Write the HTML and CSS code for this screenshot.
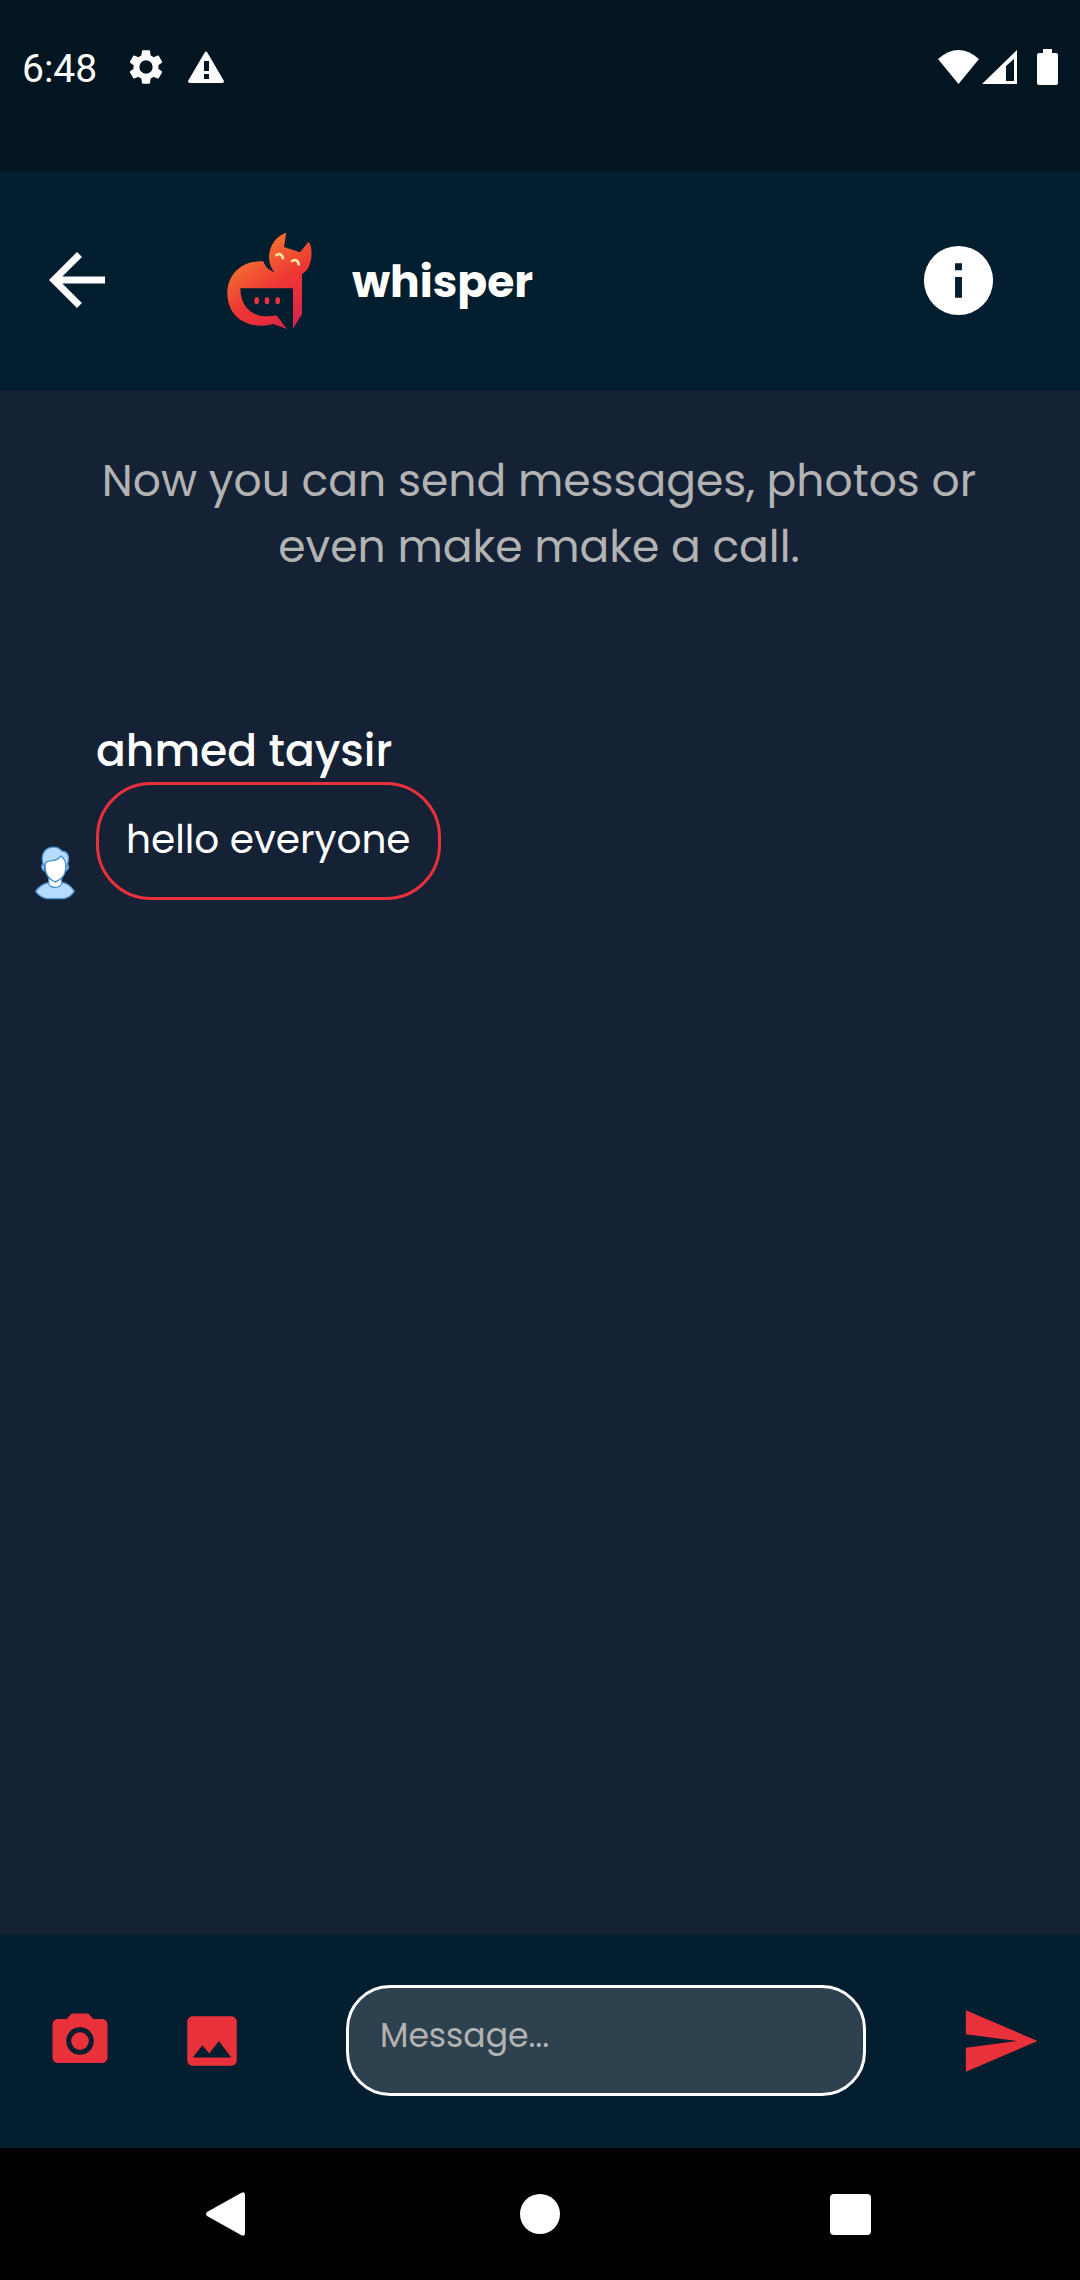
FILE: index.html
```html
<!DOCTYPE html>
<html lang="en">
<head>
<meta charset="utf-8">
<meta name="viewport" content="width=device-width, initial-scale=1">
<title>whisper</title>
<link rel="stylesheet" href="styles.css">
</head>
<body>
<div class="status-bar">
  <div class="status-group status-left">
    <span class="clock">6:48</span>
    <svg class="icon-gear" width="40" height="40" viewBox="0 0 24 24" aria-hidden="true"><path fill="currentColor" fill-rule="evenodd" d="M19.4 13c0-.3.1-.6.1-1s0-.7-.1-1l2.1-1.600c.2-.2.3-.4.100-.700l-2-3.400c-.1-.2-.4-.3-.6-.2l-2.500 1c-.5-.4-1.100-.7-1.700-1l-.4-2.600c0-.3-.2-.5-.5-.5h-3.800c-.3 0-.5.2-.5.5L9.200 5.100c-.6.3-1.200.6-1.700 1L5 5.100c-.2-.1-.5 0-.6.2l-2 3.400c-.1.3-.1.5.1.700L4.600 11c0 .3-.1.600-.1 1s0 .7.1 1l-2.100 1.600c-.2.2-.2.4-.1.700l2 3.400c.1.2.4.3.6.2l2.500-1c.5.4 1.100.7 1.700 1l.4 2.600c0 .3.2.5.5.5h3.800c.3 0 .5-.2.5-.5l.4-2.600c.6-.3 1.200-.6 1.700-1l2.500 1c.2.1.5 0 .6-.2l2-3.400c.1-.3.100-.5-.1-.700zM12 16a4 4 0 1 1 0-8 4 4 0 0 1 0 8z"/></svg>
    <svg class="icon-warning" width="36" height="32" viewBox="0 0 36 32" aria-hidden="true"><path fill="currentColor" fill-rule="evenodd" d="M17 1q1-1 2 0l17 29q0 2-2 2H2q-2 0-2-2zM16 10v10h5V10zm0 13v5h5v-5z"/></svg>
  </div>
  <div class="status-group status-right">
    <svg width="41" height="34" viewBox="0 0 41 34" aria-hidden="true"><path fill="currentColor" d="M0 9Q20.500-9 41 9L20.500 34z"/></svg>
    <svg width="35" height="34" viewBox="0 0 35 34" aria-hidden="true"><path fill="currentColor" fill-rule="evenodd" d="M35 0v34H0zM32 9l-8 7v15h8z"/></svg>
    <svg class="icon-battery" width="21" height="36" viewBox="0 0 21 36" aria-hidden="true"><path fill="currentColor" d="M6 0h9v4h4q2 0 2 2v28q0 2-2 2H2q-2 0-2-2V6q0-2 2-2h4z"/></svg>
  </div>
</div>

<header class="chat-header">
  <button class="icon-button" type="button" aria-label="Back">
    <svg width="84" height="84" viewBox="0 0 24 24"><path fill="currentColor" d="M20 11H7.830l5.590-5.590L12 4l-8 8 8 8 1.410-1.410L7.830 13H20z"/></svg>
  </button>
  <svg class="logo" width="120" height="120" viewBox="0 0 360 360" role="img" aria-label="Group logo">
    <defs>
      <linearGradient id="fur" gradientUnits="userSpaceOnUse" x1="110" y1="80" x2="270" y2="320">
        <stop offset="0" stop-color="#f47c2f"/>
        <stop offset=".52" stop-color="#ee3435"/>
        <stop offset=".7" stop-color="#e93039"/>
        <stop offset="1" stop-color="#cf2253"/>
      </linearGradient>
    </defs>
    <path fill="url(#fur)" fill-rule="evenodd" d="M229 38C198 48 178 76 177 111C177 130 184 145 193 156C178 153 165 140 160 124C94 121 52 164 52 221C52 281 99 319 158 317Q176 317 190 312L231 327L199 286C144 297 92 276 91 205H249V326L276 282V162C300 150 307 114 304 89Q302 71 295 66L270 97L222 81Z"/>
    <g fill="#e93340"><ellipse cx="140" cy="242" rx="7" ry="11"/><ellipse cx="171" cy="242" rx="7" ry="11"/><ellipse cx="203" cy="242" rx="7" ry="11"/></g>
    <path fill="none" stroke="#ffe3a0" stroke-width="8" d="M197 108C203 98 219 101 219 118M244 126C250 116 267 119 266 136"/>
  </svg>
  <h1 class="chat-title">whisper</h1>
  <button class="icon-button info-button" type="button" aria-label="Group info">
    <svg width="83" height="83" viewBox="0 0 24 24"><path fill="currentColor" fill-rule="evenodd" d="M12 2a10 10 0 1 0 0 20 10 10 0 0 0 0-20zm-1 5h2v2h-2zm0 4h2v6h-2z"/></svg>
  </button>
</header>

<main class="chat">
  <p class="intro">Now you can send messages, photos or even make make a call.</p>
  <article class="message">
    <svg class="avatar" width="40" height="54" viewBox="45 56 120 162" role="img" aria-label="Member picture">
      <g stroke="#4a90d0" stroke-width="4" stroke-linejoin="round">
        <path fill="#b3dcff" d="M70 111C61 113 65 127 74 132M140 111Q150 114 143 126L137 132"/>
        <path fill="#b3dcff" d="M47 192Q62 170 86 166L124 165Q148 167 163 192Q151 210 132 214H80Q60 210 47 192z"/>
        <path fill="#fff" d="M86 151V168Q88 179 105 180Q122 179 125 168V151z"/>
        <path fill="#fff" d="M75 97Q98 102 124 81L137 99V123Q136 154 105 164Q77 151 75 121z"/>
        <path fill="#b3dcff" d="M74 120C62 99 63 67 93 60Q115 56 125 71C142 71 149 86 144 105Q143 116 138 120Q139 99 123 86Q112 99 96 100Q82 100 76 107z"/>
      </g>
    </svg>
    <div class="message-body">
      <h2 class="sender">ahmed taysir</h2>
      <p class="bubble">hello everyone</p>
    </div>
  </article>
</main>

<form class="composer">
  <button class="icon-button" type="button" aria-label="Take photo">
    <svg width="66" height="66" viewBox="0 0 24 24"><circle cx="12" cy="12" r="3.200" fill="currentColor"/><path fill="currentColor" d="M9 2 7.170 4H4c-1.100 0-2 .9-2 2v12c0 1.100.9 2 2 2h16c1.100 0 2-.9 2-2V6c0-1.100-.9-2-2-2h-3.170L15 2H9zm3 15c-2.760 0-5-2.240-5-5s2.240-5 5-5 5 2.240 5 5-2.240 5-5 5z"/></svg>
  </button>
  <button class="icon-button gallery-button" type="button" aria-label="Choose picture">
    <svg width="66" height="66" viewBox="0 0 24 24"><path fill="currentColor" d="M21 19V5c0-1.100-.9-2-2-2H5c-1.100 0-2 .9-2 2v14c0 1.100.9 2 2 2h14c1.100 0 2-.9 2-2zM8.500 13.500l2.500 3.010L14.500 12l4.500 6H5l3.500-4.500z"/></svg>
  </button>
  <input class="message-input" type="text" placeholder="Message..." aria-label="Message">
  <button class="icon-button" type="submit" aria-label="Send">
    <svg width="82" height="82" viewBox="0 0 24 24"><path fill="currentColor" d="M2.010 21 23 12 2.010 3 2 10l15 2-15 2z"/></svg>
  </button>
</form>

<nav class="system-nav" aria-label="System">
  <button class="icon-button" type="button" aria-label="System back">
    <svg width="48" height="48" viewBox="0 0 48 48"><path fill="currentColor" d="M37 3q4-2 4 2v38q0 4-4 2L3 26q-2-2 0-4z"/></svg>
  </button>
  <button class="icon-button" type="button" aria-label="Home">
    <svg width="48" height="48" viewBox="0 0 48 48"><circle fill="currentColor" cx="24" cy="24" r="20"/></svg>
  </button>
  <button class="icon-button" type="button" aria-label="Recent apps">
    <svg width="48" height="48" viewBox="0 0 48 48"><rect fill="currentColor" x="2" y="4" width="41" height="41" rx="4"/></svg>
  </button>
</nav>
</body>
</html>
```
FILE: styles.css
```css
* {
  box-sizing: border-box;
}

body {
  margin: 0;
  min-height: 100vh;
  display: flex;
  flex-direction: column;
  background: #152235;
  color: #fff;
  font-family: Poppins, Inter, sans-serif;
}

svg {
  display: block;
  flex: none;
}

h1, h2, p {
  margin: 0;
}

.icon-button {
  flex: none;
  padding: 0;
  border: 0;
  background: none;
  color: inherit;
}

.status-bar {
  display: flex;
  justify-content: space-between;
  align-items: center;
  padding: 42px 22px 79px;
  background: #021521;
}

.status-group {
  display: flex;
  align-items: center;
}

.clock {
  padding-top: 4px;
  font: 39px/46px Roboto, sans-serif;
}

.icon-gear {
  margin-left: 29px;
}

.icon-warning {
  margin-left: 22px;
}

.status-right {
  gap: 3px;
}

.icon-battery {
  margin-left: 17px;
}

.chat-header {
  display: flex;
  align-items: center;
  padding: 49px 80px 51px 35px;
  background: #021e2f;
}

.logo {
  margin-left: 91px;
}

.chat-title {
  margin-left: 22px;
  padding-top: 4px;
  font-size: 44px;
  line-height: 66px;
  font-weight: 700;
}

.info-button {
  margin-left: auto;
}

.chat {
  flex: 1;
  padding: 57px 32px;
}

.intro {
  padding: 0 50px 0 48px;
  color: #b3b3b3;
  font-size: 44px;
  line-height: 66px;
  text-align: center;
}

.message {
  display: flex;
  align-items: flex-end;
  margin-top: 138px;
}

.avatar {
  margin-left: 3px;
}

.message-body {
  margin-left: 21px;
}

.sender {
  font-size: 44px;
  line-height: 66px;
  font-weight: 500;
}

.bubble {
  width: fit-content;
  margin-top: -2px;
  padding: 27px 27px 29px;
  border: 3px solid #e9313c;
  border-radius: 55px;
  font-size: 39px;
  line-height: 56px;
}

.composer {
  display: flex;
  align-items: center;
  padding: 51px 39px 52px 47px;
  background: #021e2f;
  color: #e9313c;
}

.gallery-button {
  margin-left: 66px;
}

.message-input {
  flex: 1;
  min-width: 0;
  height: 111px;
  margin: 0 93px 0 101px;
  padding: 0 31px 10px;
  border: 3px solid #fff;
  border-radius: 44px;
  background: #2d414f;
  color: #fff;
  font-family: inherit;
  font-size: 33px;
}

.message-input::placeholder {
  color: #b3b3b3;
  opacity: 1;
}

.system-nav {
  display: flex;
  justify-content: center;
  gap: 264px;
  padding: 42px 0;
  background: #000;
}
```
